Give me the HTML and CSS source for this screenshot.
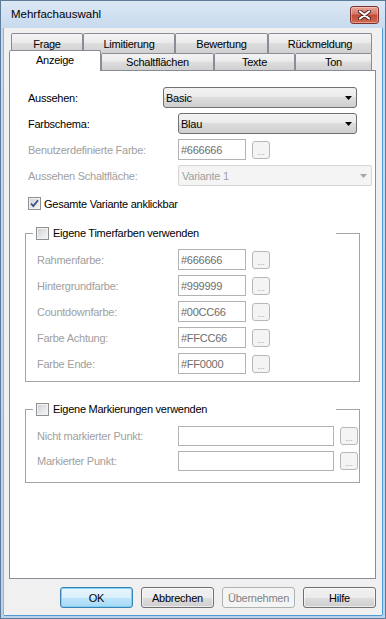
FILE: index.html
```html
<!DOCTYPE html>
<html lang="de">
<head>
    <meta charset="UTF-8">
    <title>Mehrfachauswahl</title>
    <link rel="stylesheet" href="styles.css">
</head>
<body>
<div class="window">
    <div class="titlebar">
        <span class="title">Mehrfachauswahl</span>
        <div class="close">
            <svg width="13" height="10" viewBox="0 0 13 10">
                <path d="M2 1.5L11 8.5M11 1.5L2 8.5" stroke="#4a2323" stroke-width="4" stroke-linecap="round"/>
                <path d="M2 1.5L11 8.5M11 1.5L2 8.5" stroke="#fff" stroke-width="2.2" stroke-linecap="round"/>
            </svg>
        </div>
    </div>
    <div class="client">
        <div class="tabrow back">
            <div class="tab" style="width:72px">Frage</div>
            <div class="tab" style="width:92px">Limitierung</div>
            <div class="tab" style="width:93px">Bewertung</div>
            <div class="tab" style="width:104px">Rückmeldung</div>
        </div>
        <div class="tabrow front">
            <div class="tab active">Anzeige</div>
            <div class="tab" style="width:113px">Schaltflächen</div>
            <div class="tab" style="width:81px">Texte</div>
            <div class="tab" style="width:77px">Ton</div>
        </div>
        <div class="panel">
            <div class="row">
                <span class="lbl w135">Aussehen:</span>
                <div class="combo w194"><span>Basic</span><svg width="7" height="4"><path d="M0 0h7L3.5 4z"/></svg></div>
            </div>
            <div class="row">
                <span class="lbl w150">Farbschema:</span>
                <div class="combo w179"><span>Blau</span><svg width="7" height="4"><path d="M0 0h7L3.5 4z"/></svg></div>
            </div>
            <div class="row">
                <span class="lbl w150 off">Benutzerdefinierte Farbe:</span>
                <div class="field w68">#666666</div>
                <div class="dots">...</div>
            </div>
            <div class="row">
                <span class="lbl w150 off">Aussehen Schaltfläche:</span>
                <div class="combo w194 disabled"><span>Variante 1</span><svg width="7" height="4"><path d="M0 0h7L3.5 4z" fill="#a6a6a6"/></svg></div>
            </div>
            <div class="check-row">
                <span class="cb">
                    <svg width="11" height="11" viewBox="0 0 11 11"><path d="M2 5.5L4.3 8L9 2.2" fill="none" stroke="#3b4f89" stroke-width="1.8"/></svg>
                </span>
                <span>Gesamte Variante anklickbar</span>
            </div>

            <fieldset class="group first">
                <legend class="legend"><span class="cb"></span><span>Eigene Timerfarben verwenden</span></legend>
                <div class="row">
                    <span class="lbl w141 off">Rahmenfarbe:</span>
                    <div class="field w68">#666666</div>
                    <div class="dots">...</div>
                </div>
                <div class="row">
                    <span class="lbl w141 off">Hintergrundfarbe:</span>
                    <div class="field w68">#999999</div>
                    <div class="dots">...</div>
                </div>
                <div class="row">
                    <span class="lbl w141 off">Countdownfarbe:</span>
                    <div class="field w68">#00CC66</div>
                    <div class="dots">...</div>
                </div>
                <div class="row">
                    <span class="lbl w141 off">Farbe Achtung:</span>
                    <div class="field w68">#FFCC66</div>
                    <div class="dots">...</div>
                </div>
                <div class="row">
                    <span class="lbl w141 off">Farbe Ende:</span>
                    <div class="field w68">#FF0000</div>
                    <div class="dots">...</div>
                </div>
            </fieldset>

            <fieldset class="group second">
                <legend class="legend"><span class="cb"></span><span>Eigene Markierungen verwenden</span></legend>
                <div class="row short">
                    <span class="lbl w141 off">Nicht markierter Punkt:</span>
                    <div class="field w156"></div>
                    <div class="dots">...</div>
                </div>
                <div class="row short">
                    <span class="lbl w141 off">Markierter Punkt:</span>
                    <div class="field w156"></div>
                    <div class="dots">...</div>
                </div>
            </fieldset>
        </div>
        <div class="buttons">
            <div class="btn default">OK</div>
            <div class="btn">Abbrechen</div>
            <div class="btn disabled">Übernehmen</div>
            <div class="btn">Hilfe</div>
        </div>
    </div>
</div>
</body>
</html>
```

FILE: styles.css
```css
*{
    box-sizing: border-box;
}
body{
    margin: 0;
    font-family: "Liberation Sans", Arial, sans-serif;
    font-size: 11px;
    letter-spacing: -0.25px;
    color: #000;
}
.window{
    width: 386px;
    height: 619px;
    display: flex;
    flex-direction: column;
    background: linear-gradient(#dce7f4, #c7d9ee 28px, #bcd2ea);
    border: 1px solid #5d7c9c;
    padding: 0 3px 3px;
}
.titlebar{
    height: 27px;
    display: flex;
    align-items: center;
    justify-content: space-between;
    padding: 0 3px 2px 7px;
}
.title{
    font-size: 11.5px;
    letter-spacing: 0;
}
.close{
    width: 29px;
    height: 18px;
    margin-top: 3px;
    border: 1px solid #7d3431;
    border-radius: 3px;
    background: linear-gradient(#e8a598, #d47664 45%, #c24a35 50%, #cf6a50);
    box-shadow: inset 0 0 0 1px rgba(255,255,255,0.35);
    display: flex;
    align-items: center;
    justify-content: center;
}
.client{
    flex: 1;
    display: flex;
    flex-direction: column;
    background: #f0f0f0;
    padding: 5px 6px 7px 5px;
    box-shadow: 0 1px 0 #4d9ad6, 1px 0 0 #4d9ad6, -1px 0 0 #8fb3d8;
}

/* tabs */
.tabrow{
    display: flex;
    margin-left: 2px;
}
.tabrow.back{
    height: 20px;
}
.tabrow.front{
    height: 17px;
    align-items: flex-end;
}
.tab{
    height: 100%;
    border: 1px solid #898c95;
    border-bottom: 0;
    border-radius: 2px 2px 0 0;
    background: linear-gradient(#f3f3f3, #ebebeb 45%, #dddddd 50%, #d0d0d0);
    display: flex;
    align-items: center;
    justify-content: center;
    flex: none;
}
.tab.active{
    width: 92px;
    height: 21px;
    margin: 0 0 -1px -2px;
    background: #fff;
    position: relative;
    z-index: 1;
    padding-bottom: 2px;
}

/* panel */
.panel{
    flex: 1;
    display: flex;
    flex-direction: column;
    align-items: flex-start;
    background: #fff;
    border: 1px solid #898c95;
    padding: 16px 0 0 18px;
}
.row{
    display: flex;
    align-items: center;
    height: 21px;
    margin-bottom: 5px;
}
.row.short{
    height: 20px;
}
.row:last-child{
    margin-bottom: 0;
}
.lbl{
    flex: none;
}
.off{
    color: #a0a0a0;
}
.w135{ width: 135px; }
.w150{ width: 150px; }
.w141{ width: 141px; }
.w194{ width: 194px; }
.w179{ width: 179px; }
.w68{ width: 68px; }
.w156{ width: 156px; }

.combo{
    height: 21px;
    border: 1px solid #707070;
    border-radius: 3px;
    background: linear-gradient(#f2f2f2, #ebebeb 50%, #dddddd 50%, #cfcfcf);
    display: flex;
    align-items: center;
    justify-content: space-between;
    padding: 0 4px 0 2px;
}
.combo.disabled{
    border-color: #d5d5d5;
    border-radius: 2px;
    background: #f4f4f4;
    color: #a0a0a0;
    padding-left: 3px;
}
.field{
    height: 100%;
    border: 1px solid #b3b3b3;
    background: #fff;
    color: #6d6d6d;
    padding-left: 2px;
    display: flex;
    align-items: center;
}
.dots{
    width: 18px;
    height: 18px;
    margin-left: 6px;
    border: 1px solid #b4b8ba;
    border-radius: 3px;
    background: #f4f4f4;
    color: #a6a6a6;
    font-size: 9px;
    letter-spacing: 0;
    line-height: 10px;
    padding-top: 5px;
    text-align: center;
}

.cb{
    width: 13px;
    height: 13px;
    flex: none;
    border: 1px solid #8e8f8f;
    background: linear-gradient(135deg, #cdd1d6, #f7f7f7);
    box-shadow: inset 0 0 0 1px #f2f2f2;
    display: flex;
    align-items: center;
    justify-content: center;
}
.check-row{
    display: flex;
    align-items: center;
    gap: 3px;
    height: 13px;
    margin-top: 6px;
}

/* group boxes */
.group{
    width: 335px;
    margin: 16px 0 0 -3px;
    border: 1px solid #a3a3a3;
    padding: 9px 0 7px 11px;
    min-inline-size: 0;
}
.group.second{
    margin-top: 20px;
    padding: 10px 0 11px 11px;
}
.legend{
    width: 303px;
    height: 14px;
    margin-left: -4px;
    padding: 0 0 0 3px;
    display: flex;
    align-items: center;
    gap: 4px;
}

/* dialog buttons */
.buttons{
    display: flex;
    justify-content: flex-end;
    gap: 8px;
    margin-top: 8px;
}
.btn{
    width: 73px;
    height: 21px;
    border: 1px solid #707070;
    border-radius: 3px;
    background: linear-gradient(#f2f2f2, #ebebeb 50%, #dddddd 50%, #cfcfcf);
    box-shadow: inset 0 0 0 1px rgba(255,255,255,0.6);
    display: flex;
    align-items: center;
    justify-content: center;
}
.btn.default{
    border-color: #3c7fb1;
    background: linear-gradient(#eaf6fd, #d9f0fc 50%, #bee6fd 50%, #a7d9f5);
    box-shadow: inset 0 0 0 1px #7cd2f5;
}
.btn.disabled{
    border-color: #adb2b5;
    background: #f4f4f4;
    box-shadow: none;
    color: #838383;
}
```
